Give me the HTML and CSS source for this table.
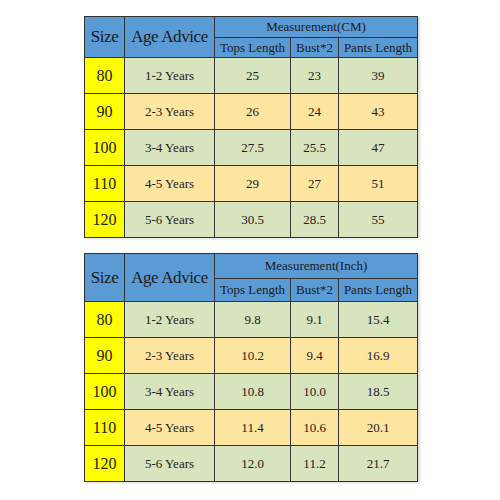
FILE: index.html
```html
<!DOCTYPE html>
<html lang="en">
<head>
    <meta charset="UTF-8">
    <meta name="viewport" content="width=device-width, initial-scale=1.0">
    <title>Size Chart</title>
    <link rel="stylesheet" href="styles.css">
</head>
<body>
    <div class="page">
        <table class="chart chart-cm">
            <colgroup>
                <col class="c-size"><col class="c-age"><col class="c-tops"><col class="c-bust"><col class="c-pants">
            </colgroup>
            <tr class="head-top">
                <th rowspan="2" class="big">Size</th>
                <th rowspan="2" class="big">Age Advice</th>
                <th colspan="3">Measurement(CM)</th>
            </tr>
            <tr class="head-sub">
                <th>Tops Length</th>
                <th>Bust*2</th>
                <th>Pants Length</th>
            </tr>
            <tr class="green"><td class="size">80</td><td>1-2 Years</td><td>25</td><td>23</td><td>39</td></tr>
            <tr class="orange"><td class="size">90</td><td>2-3 Years</td><td>26</td><td>24</td><td>43</td></tr>
            <tr class="green"><td class="size">100</td><td>3-4 Years</td><td>27.5</td><td>25.5</td><td>47</td></tr>
            <tr class="orange"><td class="size">110</td><td>4-5 Years</td><td>29</td><td>27</td><td>51</td></tr>
            <tr class="green"><td class="size">120</td><td>5-6 Years</td><td>30.5</td><td>28.5</td><td>55</td></tr>
        </table>

        <table class="chart chart-inch">
            <colgroup>
                <col class="c-size"><col class="c-age"><col class="c-tops"><col class="c-bust"><col class="c-pants">
            </colgroup>
            <tr class="head-top">
                <th rowspan="2" class="big">Size</th>
                <th rowspan="2" class="big">Age Advice</th>
                <th colspan="3">Measurement(Inch)</th>
            </tr>
            <tr class="head-sub">
                <th>Tops Length</th>
                <th>Bust*2</th>
                <th>Pants Length</th>
            </tr>
            <tr class="green"><td class="size">80</td><td>1-2 Years</td><td>9.8</td><td>9.1</td><td>15.4</td></tr>
            <tr class="orange"><td class="size">90</td><td>2-3 Years</td><td>10.2</td><td>9.4</td><td>16.9</td></tr>
            <tr class="green"><td class="size">100</td><td>3-4 Years</td><td>10.8</td><td>10.0</td><td>18.5</td></tr>
            <tr class="orange"><td class="size">110</td><td>4-5 Years</td><td>11.4</td><td>10.6</td><td>20.1</td></tr>
            <tr class="green"><td class="size">120</td><td>5-6 Years</td><td>12.0</td><td>11.2</td><td>21.7</td></tr>
        </table>
    </div>
</body>
</html>
```

FILE: styles.css
```css
body {
    margin: 0;
    padding: 0;
    background-color: #ffffff;
    font-family: "Liberation Serif", "Times New Roman", serif;
    color: #222;
}

.page {
    width: 500px;
    height: 500px;
    display: flex;
    flex-direction: column;
    align-items: flex-start;
    padding: 16px 0 0 84px;
    box-sizing: border-box;
    gap: 15px;
}

.chart {
    border-collapse: collapse;
    table-layout: fixed;
    width: 333px;
    box-shadow: 2px 1px 2px rgba(0,0,0,0.15);
}

.c-size { width: 40px; }
.c-age { width: 90px; }
.c-tops { width: 76px; }
.c-bust { width: 48px; }
.c-pants { width: 79px; }

.chart th,
.chart td {
    border: 1px solid #333;
    padding: 0;
    text-align: center;
    white-space: nowrap;
    overflow: hidden;
}

.chart th {
    background-color: #5b9bd5;
    font-weight: normal;
    font-size: 13px;
    color: #1a1a1a;
}

.chart th.big {
    font-size: 17px;
    letter-spacing: -0.4px;
}

.chart-cm .head-top { height: 21px; }
.chart-cm .head-sub { height: 20px; }
.chart-inch .head-top { height: 25px; }
.chart-inch .head-sub { height: 23px; }

.chart td {
    height: 35px;
    font-size: 13px;
}

.chart td.size {
    background-color: #ffff00;
    font-size: 16px;
}

.green td {
    background-color: #d7e4bd;
}

.orange td {
    background-color: #fee5a0;
}
```
